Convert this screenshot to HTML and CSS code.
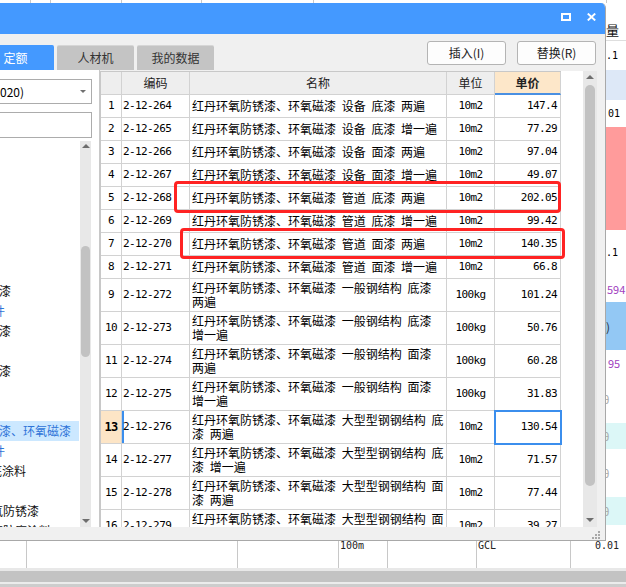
FILE: index.html
```html
<!DOCTYPE html>
<html lang="zh-CN">
<head>
<meta charset="utf-8">
<title>定额</title>
<link rel="stylesheet" href="styles.css">
</head>
<body>
<div class="screen">
  <div class="topstrip">
    <span class="ts ts1"></span><span class="ts ts2"></span><span class="ts ts3"></span><span class="ts ts4"></span><span class="ts ts5"></span><span class="ts ts6"></span>
  </div>

  <div class="dialog">
    <div class="titlebar">
      <span class="icon-max"></span>
      <svg class="icon-close" width="9" height="8" viewBox="0 0 9 8"><path d="M0.8 0.6 L8.2 7.4 M8.2 0.6 L0.8 7.4" stroke="#fff" stroke-width="2"/></svg>
    </div>

    <div class="toolbar">
      <div class="tabs">
        <div class="tab active">定额</div>
        <div class="tab">人材机</div>
        <div class="tab">我的数据</div>
      </div>
      <div class="buttons">
        <button class="btn">插入(I)</button>
        <button class="btn">替换(R)</button>
      </div>
    </div>

    <div class="main">
      <div class="leftpanel">
        <div class="combo"><span class="combo-text">020)</span><span class="caret"></span></div>
        <div class="search"></div>
        <div class="tree">
          <ul class="tree-items">
            <li></li><li></li><li></li><li></li><li></li><li></li><li></li>
            <li><span class="cut13">磁漆</span></li>
            <li class="blue"><span class="cut7">件</span></li>
            <li><span class="cut13">磁漆</span></li>
            <li></li>
            <li><span class="cut13">磁漆</span></li>
            <li></li><li></li>
            <li class="sel"><span class="cut13">锈漆、环氧磁漆</span></li>
            <li class="blue"><span class="cut7">件</span></li>
            <li><span class="cut10">底涂料</span></li>
            <li></li>
            <li><span class="cut9">氧防锈漆</span></li>
            <li><span class="cut9">氧防腐涂料</span></li>
          </ul>
          <div class="vscroll lscroll">
            <span class="arrow up"></span>
            <span class="thumb"></span>
            <span class="arrow down"></span>
          </div>
        </div>
      </div>

      <div class="gridarea">
        <div class="gridbody">
          <table class="tbl">
            <colgroup><col class="c-num"><col class="c-code"><col class="c-name"><col class="c-unit"><col class="c-price"></colgroup>
            <thead>
              <tr class="rh"><th></th><th>编码</th><th>名称</th><th>单位</th><th class="th-price">单价</th></tr>
            </thead>
            <tbody>
              <tr class="r1"><td class="num">1</td><td class="code">2-12-264</td><td class="name">红丹环氧防锈漆、环氧磁漆 设备 底漆 两遍</td><td class="unit">10m2</td><td class="price">147.4</td></tr>
              <tr class="r1"><td class="num">2</td><td class="code">2-12-265</td><td class="name">红丹环氧防锈漆、环氧磁漆 设备 底漆 增一遍</td><td class="unit">10m2</td><td class="price">77.29</td></tr>
              <tr class="r1"><td class="num">3</td><td class="code">2-12-266</td><td class="name">红丹环氧防锈漆、环氧磁漆 设备 面漆 两遍</td><td class="unit">10m2</td><td class="price">97.04</td></tr>
              <tr class="r1"><td class="num">4</td><td class="code">2-12-267</td><td class="name">红丹环氧防锈漆、环氧磁漆 设备 面漆 增一遍</td><td class="unit">10m2</td><td class="price">49.07</td></tr>
              <tr class="r1"><td class="num">5</td><td class="code">2-12-268</td><td class="name">红丹环氧防锈漆、环氧磁漆 管道 底漆 两遍</td><td class="unit">10m2</td><td class="price">202.05</td></tr>
              <tr class="r1"><td class="num">6</td><td class="code">2-12-269</td><td class="name">红丹环氧防锈漆、环氧磁漆 管道 底漆 增一遍</td><td class="unit">10m2</td><td class="price">99.42</td></tr>
              <tr class="r1"><td class="num">7</td><td class="code">2-12-270</td><td class="name">红丹环氧防锈漆、环氧磁漆 管道 面漆 两遍</td><td class="unit">10m2</td><td class="price">140.35</td></tr>
              <tr class="r1"><td class="num">8</td><td class="code">2-12-271</td><td class="name">红丹环氧防锈漆、环氧磁漆 管道 面漆 增一遍</td><td class="unit">10m2</td><td class="price">66.8</td></tr>
              <tr class="r2"><td class="num">9</td><td class="code">2-12-272</td><td class="name wrap">红丹环氧防锈漆、环氧磁漆 一般钢结构 底漆 两遍</td><td class="unit">100kg</td><td class="price">101.24</td></tr>
              <tr class="r2"><td class="num">10</td><td class="code">2-12-273</td><td class="name wrap">红丹环氧防锈漆、环氧磁漆 一般钢结构 底漆 增一遍</td><td class="unit">100kg</td><td class="price">50.76</td></tr>
              <tr class="r2"><td class="num">11</td><td class="code">2-12-274</td><td class="name wrap">红丹环氧防锈漆、环氧磁漆 一般钢结构 面漆 两遍</td><td class="unit">100kg</td><td class="price">60.28</td></tr>
              <tr class="r2"><td class="num">12</td><td class="code">2-12-275</td><td class="name wrap">红丹环氧防锈漆、环氧磁漆 一般钢结构 面漆 增一遍</td><td class="unit">100kg</td><td class="price">31.83</td></tr>
              <tr class="r2 current"><td class="num">13</td><td class="code">2-12-276</td><td class="name wrap">红丹环氧防锈漆、环氧磁漆 大型型钢钢结构 底漆 两遍</td><td class="unit">10m2</td><td class="price selected">130.54</td></tr>
              <tr class="r2"><td class="num">14</td><td class="code">2-12-277</td><td class="name wrap">红丹环氧防锈漆、环氧磁漆 大型型钢钢结构 底漆 增一遍</td><td class="unit">10m2</td><td class="price">71.57</td></tr>
              <tr class="r2"><td class="num">15</td><td class="code">2-12-278</td><td class="name wrap">红丹环氧防锈漆、环氧磁漆 大型型钢钢结构 面漆 两遍</td><td class="unit">10m2</td><td class="price">77.44</td></tr>
              <tr class="r2"><td class="num">16</td><td class="code">2-12-279</td><td class="name wrap">红丹环氧防锈漆、环氧磁漆 大型型钢钢结构 面漆 增一遍</td><td class="unit">10m2</td><td class="price">39.27</td></tr>
            </tbody>
          </table>
          <div class="mark mark1"></div>
          <div class="mark mark2"></div>
        </div>
        <div class="vscroll tscroll">
          <span class="arrow up"></span>
          <span class="thumb"></span>
          <span class="arrow down"></span>
        </div>
      </div>
    </div>

    <div class="statusbar">
      <svg class="grip" width="9" height="9" viewBox="0 0 9 9">
        <rect x="7" y="1" width="2" height="2" fill="#a8a8a8"/>
        <rect x="4" y="4" width="2" height="2" fill="#a8a8a8"/>
        <rect x="7" y="4" width="2" height="2" fill="#a8a8a8"/>
        <rect x="1" y="7" width="2" height="2" fill="#a8a8a8"/>
        <rect x="4" y="7" width="2" height="2" fill="#a8a8a8"/>
        <rect x="7" y="7" width="2" height="2" fill="#a8a8a8"/>
      </svg>
    </div>
  </div>

  <div class="rightstrip">
    <div class="rb rb1"><span class="hdr">量</span></div>
    <div class="rb rb2 mono">.1</div>
    <div class="rb rb3"></div>
    <div class="rb rb4 mono">01</div>
    <div class="rb rb5"></div>
    <div class="rb rb6 mono">.1</div>
    <div class="rb rb7 purple">594</div>
    <div class="rb rb8">)</div>
    <div class="rb rb9 purple">95</div>
    <div class="rb rb10 ghost">θ</div>
    <div class="rb rb11 ghost">θ</div>
    <div class="rb rb12 ghost">θ</div>
    <div class="rb rb13 ghost">θ</div>
    <div class="rb rb14"></div>
  </div>

  <div class="bottom">
    <div class="brow">
      <div class="bc bc1"></div>
      <div class="bc bc2"></div>
      <div class="bc bc3"></div>
      <div class="bc bc4"><span class="btxt">100m</span></div>
      <div class="bc bc5"></div>
      <div class="bc bc6"><span class="btxt">GCL</span></div>
      <div class="bc bc7"><span class="btxt right">0.01</span></div>
    </div>
    <div class="bbar b1"></div>
    <div class="bbar b2"></div>
    <div class="bbar b3"></div>
    <div class="bbar b4"></div>
  </div>
</div>
</body>
</html>
```

FILE: styles.css
```css
* { box-sizing: border-box; margin: 0; padding: 0; }
html, body { width: 626px; height: 587px; overflow: hidden; background: #fff; }
body {
  font-family: "Noto Sans CJK SC", "Microsoft YaHei", sans-serif;
  font-size: 12px;
  color: #000;
}
.screen {
  display: grid;
  grid-template-columns: 606px 20px;
  grid-template-rows: 3px 538px 46px;
  width: 626px;
  height: 587px;
}

/* underlying app top strip */
.topstrip { grid-column: 1 / 3; grid-row: 1; display: flex; background: #fff; overflow: hidden; }
.ts { height: 3px; border-right: 1px solid #c8c8c8; flex: none; }
.ts1 { width: 31px; }
.ts2 { width: 20px; }
.ts3 { width: 71px; }
.ts4 { width: 80px; }
.ts5 { width: 112px; }
.ts6 { width: 293px; }

/* dialog */
.dialog {
  grid-column: 1; grid-row: 2;
  display: flex; flex-direction: column;
  background: #f0f0f0;
  border-right: 1px solid #a8a8a8;
  border-bottom: 1px solid #a8a8a8;
  border-top-right-radius: 5px;
  overflow: hidden;
}
.titlebar {
  height: 31px; flex: none;
  background: #4499ff;
  display: flex; justify-content: flex-end; align-items: flex-start;
  padding: 10px 9px 0 0;
  gap: 16px;
}
.icon-max { width: 10px; height: 8px; border: 2px solid #fff; display: block; }
.icon-close { display: block; }

.toolbar {
  height: 36px; flex: none;
  display: flex; justify-content: space-between; align-items: flex-start;
}
.tabs { display: flex; gap: 3px; margin-left: -23px; margin-top: 11px; }
.tab {
  width: 77px; height: 25px;
  background: #c4c4c4;
  border-top: 1px solid #d6d6d6;
  border-radius: 2px 2px 0 0;
  color: #333;
  line-height: 24px;
  text-align: center;
}
.tab.active { background: #4499ff; border-top-color: #4499ff; color: #fff; }
.buttons { display: flex; gap: 11px; margin: 7px 9px 0 0; }
.btn {
  width: 79px; height: 24px;
  background: #fdfdfd;
  border: 1px solid #b4b4b4;
  border-radius: 3px;
  font-family: "Noto Sans CJK SC", sans-serif;
  font-size: 12px;
  color: #222;
  line-height: 22px;
}

.main { height: 457px; flex: none; display: flex; }

/* left panel */
.leftpanel {
  width: 99px; flex: none;
  background: #fff;
  padding: 9px 7px 0 0;
  display: flex; flex-direction: column;
}
.combo {
  height: 25px; margin-left: -5px;
  border: 1px solid #acacac;
  display: flex; align-items: center; justify-content: space-between;
  padding: 0 4px 0 4px;
}
.combo-text { line-height: 14px; }
.caret {
  width: 0; height: 0;
  border-left: 3px solid transparent;
  border-right: 3px solid transparent;
  border-top: 3px solid #707070;
  margin-right: 1px;
}
.search { height: 26px; margin-top: 8px; margin-left: -5px; border: 1px solid #acacac; }
.tree { height: 386px; margin-top: 3px; display: flex; overflow: hidden; }
.tree-items { list-style: none; width: 80px; flex: none; overflow: hidden; }
.tree-items li {
  height: 20px; line-height: 20px;
  white-space: nowrap; overflow: hidden;
  color: #111;
}
.tree-items li.blue { color: #2f74d8; }
.tree-items li.sel { background: #cce8ff; color: #2f74d8; width: 79px; }
.cut13 { margin-left: -13px; }
.cut10 { margin-left: -10px; }
.cut9 { margin-left: -9px; }
.cut7 { margin-left: -7px; }

/* scrollbars */
.vscroll {
  display: flex; flex-direction: column; align-items: center;
  background: #e8e8e8;
  flex: none;
}
.arrow { width: 0; height: 0; border-left: 4px solid transparent; border-right: 4px solid transparent; flex: none; }
.arrow.up { border-bottom: 4px solid #6e6e6e; }
.arrow.down { border-top: 4px solid #6e6e6e; margin-top: auto; }
.thumb { background: #c2c2c2; border-radius: 5px; flex: none; }
.lscroll { width: 11px; height: 386px; padding: 3px 0 4px; }
.lscroll .thumb { width: 9px; height: 111px; margin-top: 98px; }
.tscroll { width: 14px; height: 456px; padding: 4px 0 5px; }
.tscroll .thumb { width: 10px; height: 401px; margin-top: 6px; }

/* grid */
.gridarea {
  width: 506px; flex: none;
  border-left: 1px solid #c8c8c8;
  padding-top: 1px;
  display: flex; align-items: flex-start;
}
.gridbody {
  position: relative;
  width: 483px; height: 456px; flex: none;
  background: #fff;
  overflow: hidden;
}
.tbl {
  border-collapse: separate; border-spacing: 0;
  table-layout: fixed;
  width: 461px;
  border-left: 1px solid #c8c8c8;
  border-top: 1px solid #c8c8c8;
}
.c-num { width: 21px; }
.c-code { width: 68px; }
.c-name { width: 257px; }
.c-unit { width: 48px; }
.c-price { width: 66px; }
:where(.tbl) th, :where(.tbl) td {
  border-right: 1px solid #d2d2d2;
  border-bottom: 1px solid #d2d2d2;
  padding: 0;
  white-space: nowrap;
  overflow: hidden;
  vertical-align: middle;
}
.hcell, :where(.tbl) th {
  background: #eeeeee;
  font-weight: normal;
  color: #222;
  text-align: center;
  line-height: 14px;
}
.th-price { background: #fde7c9; font-weight: bold; border-bottom: 2px solid #4a90e2; }
:where(.tbl) th.th-price { background: #fde7c9; font-weight: bold; border-bottom: 2px solid #4a90e2; }
.rh { height: 23px; }
.r1 { height: 23px; }
.r2 { height: 33px; }
.num, .code, .unit, .price {
  font-family: "DejaVu Sans Mono", "Liberation Mono", monospace;
  font-size: 11px;
  letter-spacing: -0.6px;
  line-height: 12px;
}
.num { text-align: center; }
.code { padding-left: 1px; }
.name { padding-left: 2px; line-height: 14px; word-spacing: 3px; }
.name.wrap { white-space: normal; }
.unit { text-align: center; }
.price { text-align: right; padding-right: 3px; }
.current .num { background: #fde5c6; font-weight: bold; font-size: 12px; }
.current .code { box-shadow: inset 2px 0 0 #3b8eed; }
.price.selected { outline: 2px solid #3b8eed; outline-offset: -1px; }

.mark {
  position: absolute;
  border: 3px solid #ff2323;
  border-radius: 4px;
}
.mark1 { left: 74px; top: 110px; width: 387px; height: 32px; }
.mark2 { left: 80px; top: 157px; width: 385px; height: 31px; }

.statusbar {
  height: 13px; flex: none;
  display: flex; justify-content: flex-end; align-items: flex-end;
  padding: 0 5px 1px 0;
}
.grip { display: block; }

/* underlying right strip */
.rightstrip { grid-column: 2; grid-row: 2; display: flex; flex-direction: column; background: #fff; overflow: hidden; }
.rb { flex: none; display: flex; align-items: center; white-space: nowrap; overflow: hidden; }
.mono { font-family: "DejaVu Sans Mono", monospace; font-size: 10px; }
.rb1 { height: 38px; align-items: flex-start; padding-top: 20px; border-bottom: 1px solid #dedede; }
.hdr { font-size: 13px; line-height: 14px; color: #111; }
.rb2 { height: 29px; }
.rb3 { height: 30px; background: #dde8f7; }
.rb4 { height: 27px; padding-left: 2px; }
.rb5 { height: 103px; background: #ff9b9b; }
.rb6 { height: 45px; }
.rb7 { height: 27px; padding-left: 1px; }
.rb8 { height: 48px; background: #93c8f4; color: #333; }
.rb9 { height: 25px; padding-left: 2px; }
.rb10 { height: 48px; }
.rb11 { height: 26px; background: #dcf7f7; }
.rb12 { height: 48px; }
.rb13 { height: 28px; background: #dcf7f7; }
.rb14 { height: 16px; }
.purple { color: #a13fc0; font-size: 11px; }
.ghost { color: #aaaaaa; font-size: 11px; margin-left: -3px; }

/* underlying bottom */
.bottom { grid-column: 1 / 3; grid-row: 3; display: flex; flex-direction: column; }
.brow { height: 27px; display: flex; background: #fff; }
.bc { height: 27px; flex: none; border-right: 1px solid #c8c8c8; overflow: hidden; }
.bc1 { width: 27px; }
.bc2 { width: 211px; }
.bc3 { width: 101px; }
.bc4 { width: 49px; padding-left: 1px; }
.bc5 { width: 89px; }
.bc6 { width: 94px; padding-left: 1px; }
.bc7 { width: 55px; border-right: none; padding-right: 7px; }
.btxt {
  display: block;
  font-family: "DejaVu Sans Mono", monospace;
  font-size: 10px;
  line-height: 9px;
  color: #222;
}
.btxt.right { text-align: right; }
.bbar { flex: none; }
.b1 { height: 3px; background: #e8e8e8; }
.b2 { height: 11px; background: #c3c3c3; }
.b3 { height: 2px; background: #ececec; }
.b4 { height: 3px; background: #cdcdcd; }
```
